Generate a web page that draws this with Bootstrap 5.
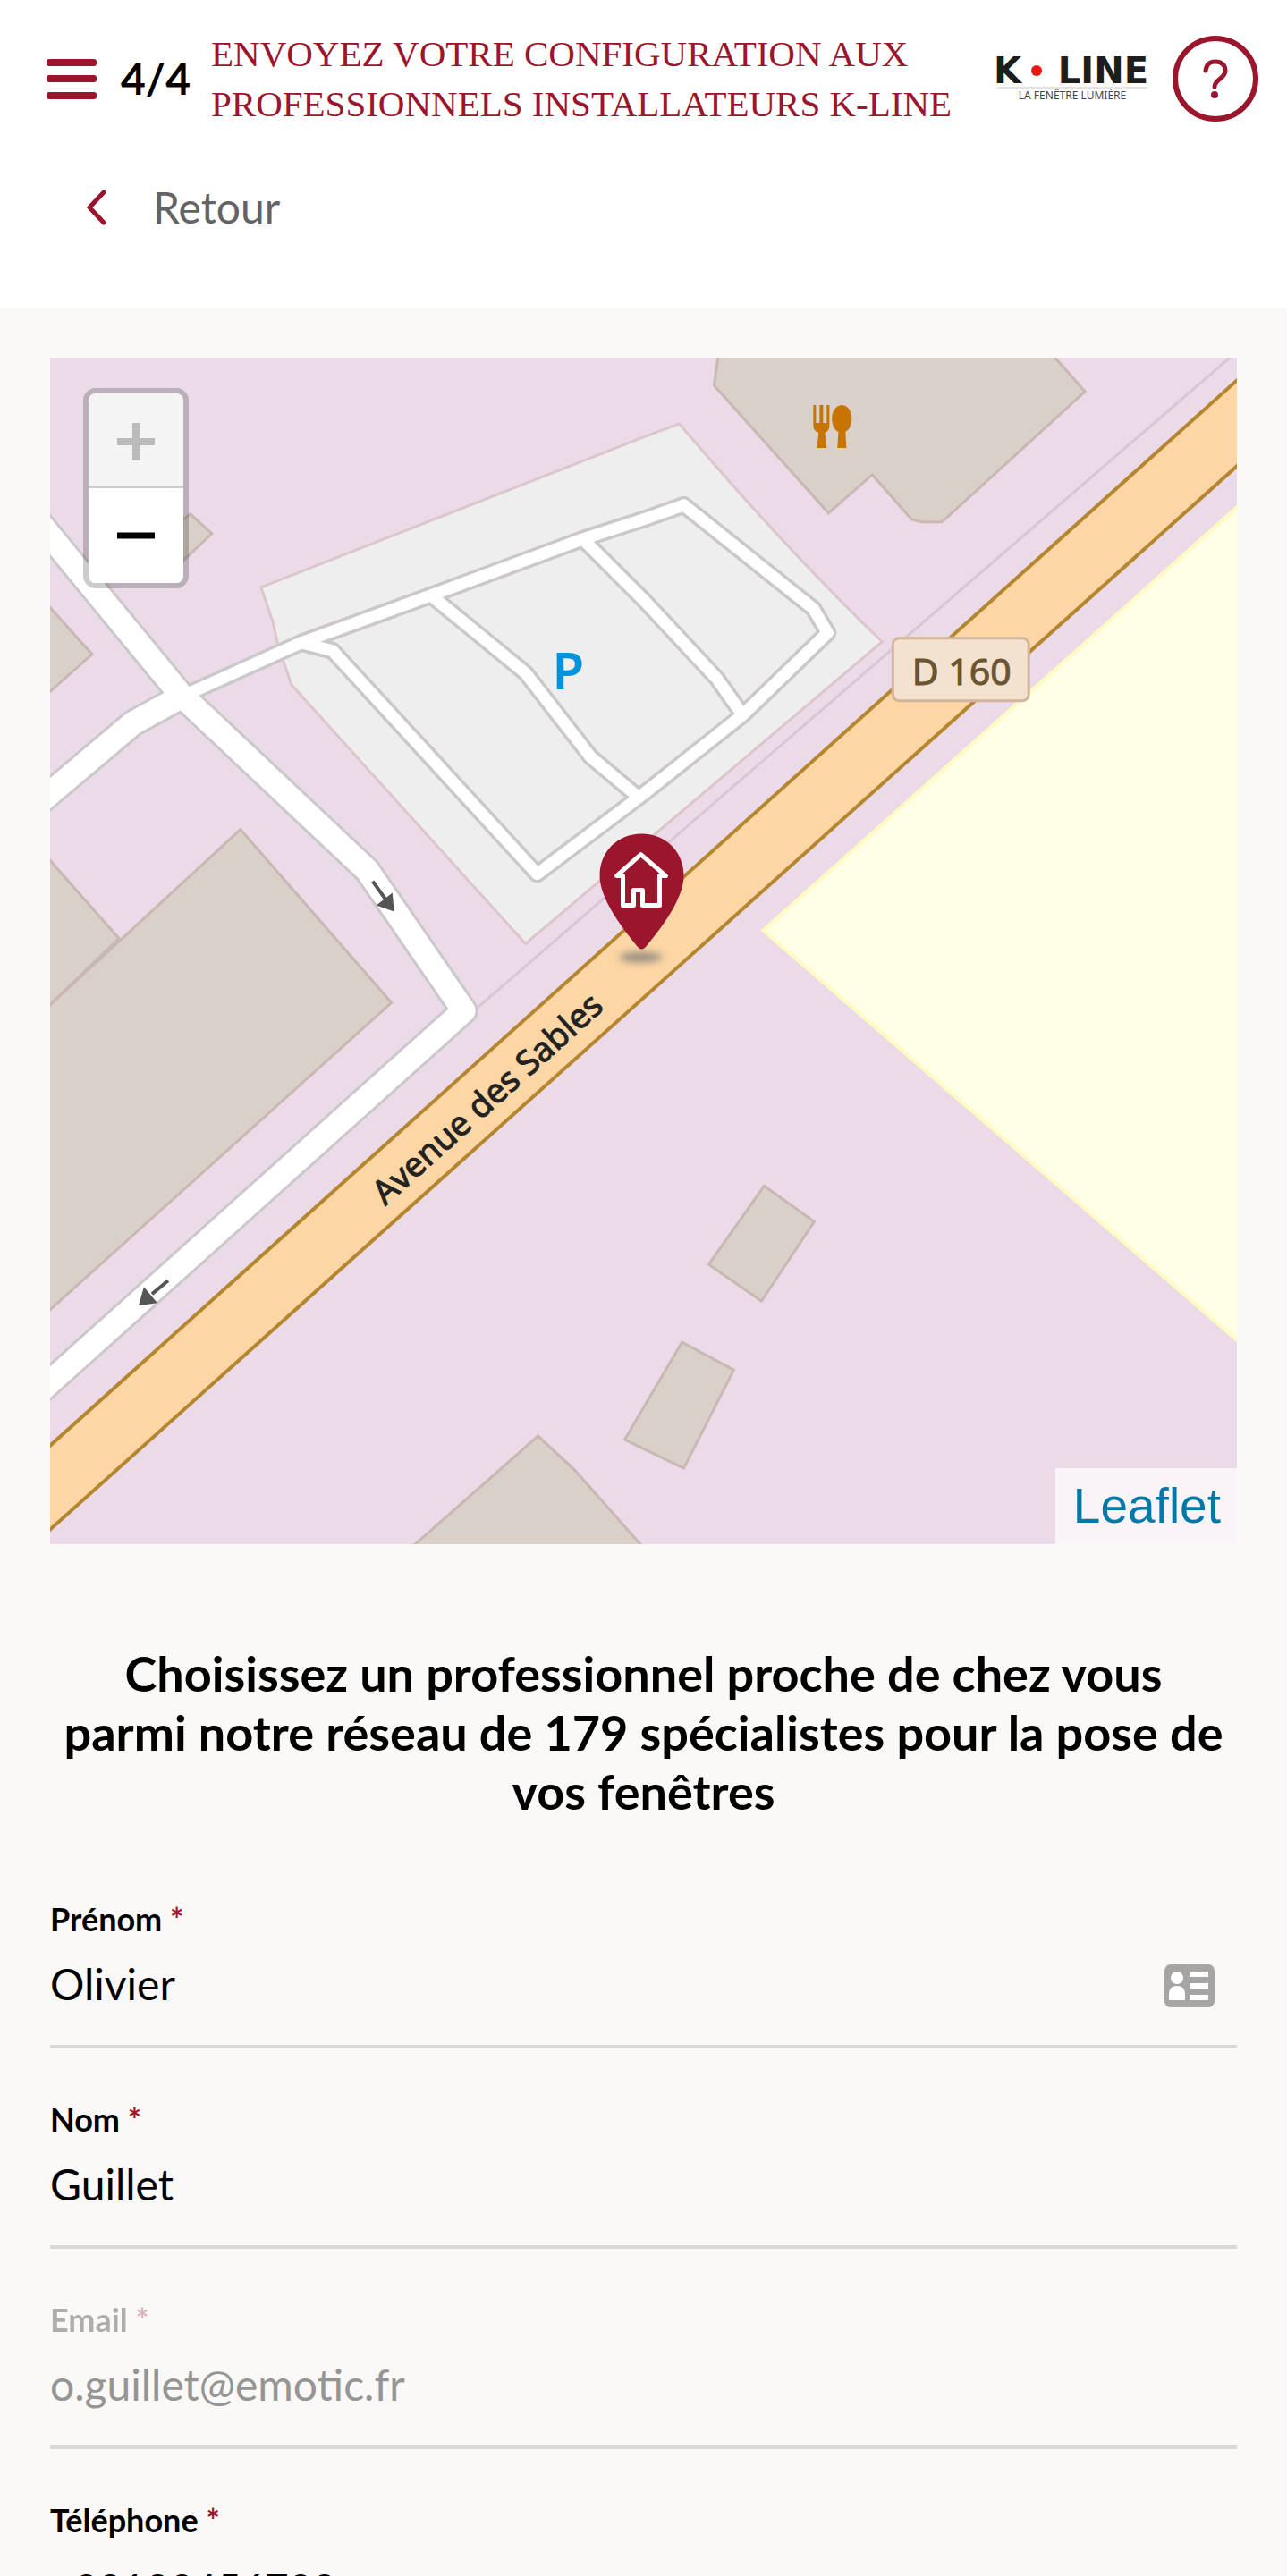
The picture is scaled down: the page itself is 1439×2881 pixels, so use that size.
<!DOCTYPE html>
<html lang="fr">
<head>
<meta charset="utf-8">
<meta name="viewport" content="width=device-width, initial-scale=1">
<title>K-LINE – Envoyez votre configuration</title>
<link rel="stylesheet" href="https://cdn.jsdelivr.net/npm/bootstrap@5.3.0/dist/css/bootstrap.min.css">
<style>
  :root { --kline: #9b162d; --page: #faf9f7; }
  body { font-family: Lato, "Open Sans", sans-serif; color: #000; background: var(--page); }
  .app-scroll { overflow-y: auto; scrollbar-width: none; min-height: 0; }
  .app-scroll::-webkit-scrollbar { display: none; }
  .app-header { height: 344px; padding: 32px 32px 0 52px; }
  .menu-btn, .back-link, .help-btn { background: none; border: 0; padding: 0; }
  .menu-btn { width: 56px; height: 56px; margin-right: 27px; }
  .step-count { font-size: 48px; line-height: 56px; font-weight: 700; width: 101px; }
  .page-title { font-family: "Liberation Serif", serif; font-size: 41px; line-height: 56px; font-weight: 400; color: var(--kline); text-transform: uppercase; }
  .brand-logo { width: 172px; height: 56px; overflow: visible; }
  .help-btn { width: 96px; height: 96px; border: 6px solid var(--kline); border-radius: 50%; margin-left: 26px; }
  .back-link { font-size: 48px; line-height: 64px; color: #636363; text-decoration: none; gap: 52px; margin: 56px 0 0 43px; }
  .content-pad { padding: 56px; }
  .map-svg { display: block; width: 100%; height: auto; }
  .zoom-ctl { top: 34px; left: 37px; width: 118px; border: 6px solid rgba(0,0,0,.2); border-radius: 14px; background-clip: padding-box; }
  .zoom-ctl button { height: 106px; border: 0; background: #fff; padding: 0; }
  .zoom-ctl button:first-child { background: #f4f4f4; border-bottom: 2px solid #ccc; border-radius: 8px 8px 0 0; padding-top: 4px; }
  .zoom-ctl button:last-child { border-radius: 0 0 8px 8px; }
  .map-credit { right: 0; bottom: 0; padding: 0 18px 0 20px; background: rgba(255,255,255,.7); font: 55px/85px "Liberation Sans", sans-serif; }
  .map-credit a { color: #0078a8; text-decoration: none; }
  .pro-title { font-size: 54px; line-height: 66px; font-weight: 700; margin: 112px 0 86px; }
  .field { height: 224px; }
  .field label { display: block; font-size: 36px; line-height: 46px; font-weight: 700; }
  .req { color: var(--kline); }
  .line-input { height: 122px; padding: 0 72px 20px 0; border: 0; border-bottom: 4px solid #d9d9d7; border-radius: 0; background: transparent; font-size: 48px; color: #000; }
  .line-input:focus { background: transparent; box-shadow: none; border-color: var(--kline); }
  .line-input:disabled { background: transparent; color: #959593; opacity: 1; }
  .tel-input { padding-bottom: 12px; font-size: 46px; }
  .field-off label { opacity: .3; }
  .card-icon { right: 25px; top: 28px; }
</style>
</head>
<body>
<div class="vh-100 d-flex flex-column">
  <header class="app-header bg-white flex-shrink-0">
    <div class="d-flex align-items-center">
      <button class="menu-btn flex-shrink-0" type="button" aria-label="Menu">
        <svg class="d-block" width="56" height="56" viewBox="0 0 56 56" fill="#9b162d"><rect y="6" width="56" height="8" rx="3"/><rect y="24" width="56" height="8" rx="3"/><rect y="43" width="56" height="8" rx="3"/></svg>
      </button>
      <div class="step-count flex-shrink-0">4/4</div>
      <h1 class="page-title mb-0 flex-grow-1">Envoyez votre configuration aux professionnels installateurs K-LINE</h1>
      <svg class="brand-logo flex-shrink-0" viewBox="0 0 172 56" role="img" aria-label="K-LINE">
        <g fill="#1d1d1b" font-family="DejaVu Sans, sans-serif" font-weight="700" font-size="40"><text x="-2" y="33">K</text><text x="171" y="33" text-anchor="end">LINE</text></g>
        <circle cx="46" cy="19" r="6" fill="#e8190f"/>
        <path d="M2 38H170" stroke="#c8c8c8"/>
        <text x="86" y="51" text-anchor="middle" font-family="Noto Sans, sans-serif" font-size="12" fill="#444">LA FENÊTRE LUMIÈRE</text>
      </svg>
      <button class="help-btn flex-shrink-0" type="button" aria-label="Aide">
        <svg class="d-block mx-auto" width="44" height="60" viewBox="0 0 44 60" fill="none" stroke="#9b162d" stroke-width="5" stroke-linecap="round"><path d="M11 21C12 13 16 11 22 11C29 11 33 15 33 21C33 30 21 31 21 39"/><circle cx="21" cy="48" r="4" fill="#9b162d" stroke="none"/></svg>
      </button>
    </div>
    <a class="back-link d-inline-flex align-items-center" href="#">
      <svg width="24" height="40" viewBox="0 0 24 40" fill="none" stroke="#9b162d" stroke-width="5" stroke-linecap="round" stroke-linejoin="round"><path d="M21 3L5 20L21 37"/></svg>
      <span>Retour</span>
    </a>
  </header>

  <main class="app-scroll flex-grow-1 content-pad">
    <div class="position-relative overflow-hidden">
      <svg class="map-svg" viewBox="56 400 1328 1328" role="img" aria-label="Carte">
        <defs><filter id="soft" x="-50%" y="-100%" width="200%" height="300%"><feGaussianBlur stdDeviation="4"/></filter></defs>
        <rect x="56" y="400" width="1328" height="1328" fill="#ebdbe8"/>
        <path d="M1390 562L854 1041L1390 1505Z" fill="#ffffe5" stroke="#fffac4" stroke-width="4"/>
        <path d="M292 657L720 489L760 474Q880 615 987 718L588 1056L326 766L311 722L305 695Z" fill="#eee" stroke="#dcc6ca" stroke-width="3"/>
        <g fill="#d9d0c9" stroke="#c9b8b1" stroke-width="3">
          <path d="M804 396L799 431L927 574L976 531L1020 581L1031 584H1054L1214 438L1177 396Z"/>
          <path d="M180 600L213 575L237 597L204 628Z"/>
          <path d="M50 673L103 732L50 779Z"/>
          <path d="M50 956L133 1050L50 1130Z"/>
          <path d="M50 1130L269 928L438 1122L50 1471Z"/>
          <path d="M855 1327L911 1367L852 1456L793 1415Z"/>
          <path d="M763 1502L821 1533L765 1643L699 1611Z"/>
          <path d="M460 1732L602 1607L643 1645L720 1732Z"/>
        </g>
        <path d="M1376 400L1017 710L751 940L535 1127" fill="none" stroke="#d8c6d5" stroke-width="3"/>
        <g fill="none" stroke-linejoin="round">
          <g stroke="#cbc7ca">
            <path stroke-width="32" d="M40 580L202 777L411 974L519 1131L40 1561M40 901L149 809L202 780"/>
            <path stroke-width="20" d="M202 780L337 719L482 666L652 603L720 581L765 565L910 681L926 708L831 800L719 889L601 978L372 728L337 719M482 666L588 753L661 847L712 890M652 603L719 670L802 759L831 800"/>
          </g>
          <g stroke="#fff">
            <path stroke-width="26" d="M40 580L202 777L411 974L519 1131L40 1561M40 901L149 809L202 780"/>
            <path stroke-width="13" d="M202 780L337 719L482 666L652 603L720 581L765 565L910 681L926 708L831 800L719 889L601 978L372 728L337 719M482 666L588 753L661 847L712 890M652 603L719 670L802 759L831 800"/>
          </g>
        </g>
        <path d="M1390 420L50 1623V1717L1390 516Z" fill="#fcd6a4" stroke="#b5852f" stroke-width="4"/>
        <g stroke="#555" stroke-width="4" fill="#555"><path d="M417 986L432 1007M188 1433L170 1448"/><path stroke="none" d="M441 1020L421 1013L439 999ZM155 1461L161 1440L176 1458Z"/></g>
        <text transform="translate(431 1350) rotate(-42)" font-family="Noto Sans, sans-serif" font-size="38" fill="#222" stroke="#222" stroke-width="1">Avenue des Sables</text>
        <text x="618" y="771" font-family="Noto Sans, sans-serif" font-weight="600" font-size="58" fill="#0092da">P</text>
        <rect x="999" y="714" width="152" height="70" rx="7" fill="#f4e2d0" stroke="#d2b59c" stroke-width="3"/>
        <text x="1076" y="766" text-anchor="middle" font-family="Noto Sans, sans-serif" font-size="41" fill="#6b5430" stroke="#6b5430" stroke-width="1">D 160</text>
        <g fill="#c77400"><path d="M910 453H913V473H917V453H921V473H925V453H928V476Q928 482 923 484L925 501H914L916 484Q910 482 910 476Z"/><path d="M942 453C956 454 956 478 946 483L947 501H937L938 483C928 478 928 454 942 453Z"/></g>
        <ellipse cx="717" cy="1071" rx="24" ry="6" fill="#777" opacity=".75" filter="url(#soft)"/>
        <path d="M718 933C745 933 765 953 765 980C765 1008 735 1044 723 1059Q718 1065 713 1059C701 1044 671 1008 671 980C671 953 691 933 718 933Z" fill="#9b162d"/>
        <path d="M690 980L717 956L745 980H738V1013H719V996H709V1013H697V980Z" fill="none" stroke="#fff" stroke-width="5" stroke-linejoin="round"/>
      </svg>
      <div class="zoom-ctl position-absolute d-flex flex-column">
        <button type="button" aria-label="Zoom avant" disabled><svg width="42" height="42" viewBox="0 0 42 42"><path d="M0 21H42M21 0V42" stroke="#bbb" stroke-width="8"/></svg></button>
        <button type="button" aria-label="Zoom arrière"><svg width="42" height="42" viewBox="0 0 42 42"><path d="M0 21H42" stroke="#000" stroke-width="7"/></svg></button>
      </div>
      <div class="map-credit position-absolute"><a href="#">Leaflet</a></div>
    </div>

    <h2 class="pro-title text-center">Choisissez un professionnel proche de chez vous<br>parmi notre réseau de 179 spécialistes pour la pose de vos fenêtres</h2>

    <form>
      <div class="field">
        <label for="prenom">Prénom <span class="req">*</span></label>
        <div class="position-relative">
          <input class="form-control line-input" id="prenom" type="text" value="Olivier">
          <svg class="card-icon position-absolute" width="56" height="48" viewBox="0 0 56 48"><rect width="56" height="48" rx="7" fill="#a5a5a5"/><g fill="#fff"><circle cx="14" cy="15" r="7"/><path d="M5 40V33Q5 24 14 24Q23 24 23 33V40Z"/><path d="M28 8H49V14H28ZM28 21H49V27H28ZM28 34H49V40H28Z"/></g></svg>
        </div>
      </div>
      <div class="field">
        <label for="nom">Nom <span class="req">*</span></label>
        <input class="form-control line-input" id="nom" type="text" value="Guillet">
      </div>
      <div class="field field-off">
        <label for="email">Email <span class="req">*</span></label>
        <input class="form-control line-input" id="email" type="email" value="o.guillet@emotic.fr" disabled>
      </div>
      <div class="field">
        <label for="tel">Téléphone <span class="req">*</span></label>
        <input class="form-control line-input tel-input" id="tel" type="tel" value="+33123456789">
      </div>
    </form>
  </main>
</div>
<script src="https://cdn.jsdelivr.net/npm/bootstrap@5.3.0/dist/js/bootstrap.bundle.min.js"></script>
</body>
</html>
